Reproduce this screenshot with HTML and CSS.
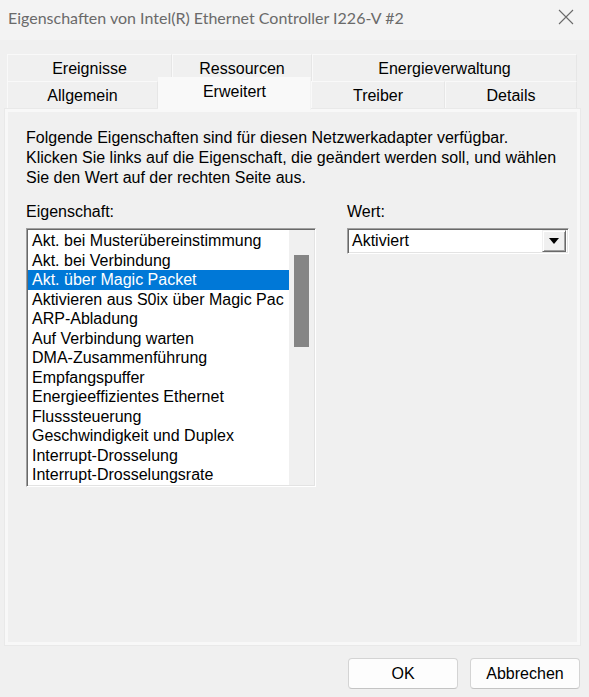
FILE: index.html
```html
<!DOCTYPE html>
<html lang="de">
<head>
<meta charset="utf-8">
<title>Eigenschaften</title>
<link rel="stylesheet" href="styles.css">
</head>
<body>
<div class="window">
  <div class="titlebar">
    <span class="title">Eigenschaften von Intel(R) Ethernet Controller I226-V #2</span>
    <svg class="close" width="16" height="16" viewBox="0 0 16 16"><path d="M1 1 L15 15 M15 1 L1 15" stroke="#6a6a6a" stroke-width="1.1" fill="none"/></svg>
  </div>
  <div class="tabs">
    <div class="tabrow row1">
      <div class="tab">Ereignisse</div>
      <div class="tab">Ressourcen</div>
      <div class="tab">Energieverwaltung</div>
    </div>
    <div class="tabrow row2">
      <div class="tab">Allgemein</div>
      <div class="tab active">Erweitert</div>
      <div class="tab">Treiber</div>
      <div class="tab">Details</div>
    </div>
  </div>
  <div class="panel">
    <div class="panel-inner">
      <p class="intro">Folgende Eigenschaften sind für diesen Netzwerkadapter verfügbar.<br>Klicken Sie links auf die Eigenschaft, die geändert werden soll, und wählen<br>Sie den Wert auf der rechten Seite aus.</p>
      <div class="cols">
        <div class="col-left">
          <div class="label">Eigenschaft:</div>
          <div class="listbox">
            <ul class="items">
              <li>Akt. bei Musterübereinstimmung</li>
              <li>Akt. bei Verbindung</li>
              <li class="sel">Akt. über Magic Packet</li>
              <li>Aktivieren aus S0ix über Magic Pac</li>
              <li>ARP-Abladung</li>
              <li>Auf Verbindung warten</li>
              <li>DMA-Zusammenführung</li>
              <li>Empfangspuffer</li>
              <li>Energieeffizientes Ethernet</li>
              <li>Flusssteuerung</li>
              <li>Geschwindigkeit und Duplex</li>
              <li>Interrupt-Drosselung</li>
              <li>Interrupt-Drosselungsrate</li>
            </ul>
            <div class="scrollbar"><div class="thumb"></div></div>
          </div>
        </div>
        <div class="col-right">
          <div class="label">Wert:</div>
          <div class="combo">
            <span class="combo-text">Aktiviert</span>
            <span class="combo-btn"><svg width="10" height="6" viewBox="0 0 10 6"><path d="M0 0 H10 L5 6 Z" fill="#000"/></svg></span>
          </div>
        </div>
      </div>
    </div>
  </div>
  <div class="buttons">
    <div class="btn">OK</div>
    <div class="btn">Abbrechen</div>
  </div>
</div>
</body>
</html>
```
FILE: styles.css
```css
html, body {
  margin: 0;
  padding: 0;
  background: #f0f0f0;
}
body {
  font-family: "Liberation Sans", Arial, sans-serif;
  font-size: 16px;
  color: #000;
}
.window {
  width: 589px;
  height: 697px;
  overflow: hidden;
}
.titlebar {
  height: 40px;
  background: #f3f3f3;
  display: flex;
  align-items: center;
  justify-content: space-between;
  padding: 0 15px 6px 8px;
  box-sizing: border-box;
}
.title {
  font-family: Lato, "Noto Sans", sans-serif;
  font-size: 16px;
  color: #6a6a6a;
}
.close {
  display: block;
}
.tabs {
  margin: 14px 12px 0 7px;
}
.tabrow {
  display: grid;
  height: 27px;
}
.row1 {
  grid-template-columns: 165px 140px 265px;
}
.row2 {
  grid-template-columns: 151px 153px 134px 132px;
}
.tab {
  display: flex;
  align-items: center;
  justify-content: center;
  background: #f0f0f0;
  border-top: 1px solid #f9f9f9;
  border-left: 1px solid #f9f9f9;
  border-right: 1px solid #e6e6e6;
  padding-top: 2px;
  box-sizing: border-box;
}
.tab.active {
  background: #f9f9f9;
  margin-top: -4px;
  margin-bottom: -2px;
  padding-top: 0;
  padding-bottom: 4px;
  position: relative;
  z-index: 1;
  border-right-color: #f3f3f3;
}
.panel {
  margin: 0 8px 0 4px;
  height: 538px;
  box-sizing: border-box;
  background: #f8f8f8;
  border: 1px solid #e9e9e9;
  padding: 3px;
}
.panel-inner {
  height: 100%;
  background: #f0f0f0;
  padding: 16px 8px 16px 18px;
  box-sizing: border-box;
}
.intro {
  margin: 0;
  line-height: 20px;
}
.cols {
  display: flex;
  gap: 31px;
  margin-top: 14px;
}
.col-left {
  width: 290px;
  flex: none;
}
.col-right {
  width: 222px;
  flex: none;
}
.label {
  line-height: 20px;
  margin-bottom: 6px;
}
.listbox {
  height: 259px;
  box-sizing: border-box;
  border: 1px solid;
  border-color: #a0a0a0 #ffffff #ffffff #a0a0a0;
  box-shadow: inset 1px 1px 0 #696969, inset -1px -1px 0 #e3e3e3;
  display: flex;
  padding: 1px;
  background: #fff;
}
.items {
  list-style: none;
  margin: 0;
  padding: 1px 0 0;
  flex: 1;
  overflow: hidden;
  background: #fff;
}
.items li {
  height: 19.5px;
  line-height: 19.5px;
  padding-left: 4px;
  white-space: nowrap;
}
.items li.sel {
  background: #0078d7;
  color: #fff;
}
.scrollbar {
  width: 25px;
  flex: none;
  background: #f0f0f0;
  padding: 25px 5px 0 5px;
  box-sizing: border-box;
}
.thumb {
  height: 92px;
  background: #858585;
}
.combo {
  height: 26px;
  box-sizing: border-box;
  border: 1px solid;
  border-color: #a0a0a0 #ffffff #ffffff #a0a0a0;
  box-shadow: inset 1px 1px 0 #696969, inset -1px -1px 0 #e3e3e3;
  background: #fff;
  display: flex;
  align-items: center;
  justify-content: space-between;
  padding: 1px 2px 1px 4px;
}
.combo-text {
  line-height: 20px;
}
.combo-btn {
  width: 24px;
  height: 22px;
  box-sizing: border-box;
  background: #f0f0f0;
  border: 1px solid;
  border-color: #f0f0f0 #696969 #696969 #f0f0f0;
  box-shadow: inset 1px 1px 0 #ffffff, inset -1px -1px 0 #a0a0a0;
  display: flex;
  align-items: center;
  justify-content: center;
}
.combo-btn svg {
  display: block;
}
.buttons {
  display: flex;
  justify-content: flex-end;
  gap: 12px;
  margin: 12px 9px 0 0;
}
.btn {
  width: 110px;
  height: 31px;
  box-sizing: border-box;
  background: #fdfdfd;
  border: 1px solid #d4d4d4;
  border-bottom-color: #c4c4c4;
  border-radius: 4px;
  display: flex;
  align-items: center;
  justify-content: center;
  font-size: 16px;
}
```
